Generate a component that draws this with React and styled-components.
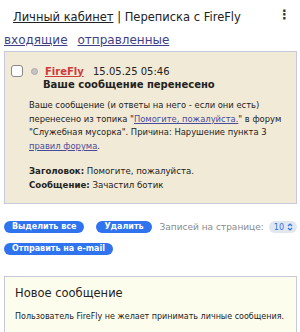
import React from 'react';
import styled, { createGlobalStyle } from 'styled-components';

const Global = createGlobalStyle`
  html, body {
    margin: 0;
    padding: 0;
    background: #fff;
  }
  body {
    font-family: "DejaVu Sans", Verdana, sans-serif;
    color: #222;
  }
`;

const Page = styled.div`
  width: 300px;
  height: 332px;
  overflow: hidden;
  padding: 0 3px 0 4px;
  box-sizing: border-box;
`;

const Header = styled.div`
  display: flex;
  justify-content: space-between;
  align-items: flex-start;
  padding: 10px 6px 0 9px;
  height: 30px;
  box-sizing: border-box;
`;

const Crumbs = styled.div`
  font-size: 11.5px;
  line-height: 14px;
  color: #222;
`;

const CrumbLink = styled.a`
  color: #222;
  text-decoration: underline;
`;

const Kebab = styled.span`
  font-size: 13px;
  line-height: 10px;
  font-weight: bold;
  color: #333;
`;

const Tabs = styled.div`
  display: flex;
  gap: 10px;
  font-size: 12px;
  line-height: 16px;
  height: 21px;
  padding-top: 2px;
  box-sizing: border-box;
`;

const Tab = styled.a`
  color: #3f3f86;
  text-decoration: underline;
`;

const MessageBox = styled.div`
  background: #f1ead6;
  border: 1px solid #c8c8dc;
  height: 153px;
  box-sizing: border-box;
  padding: 13px 8px 0 6px;
`;

const MsgHead = styled.div`
  display: flex;
  align-items: center;
  height: 12px;
`;

const Check = styled.span`
  width: 10px;
  height: 10px;
  border: 1px solid #888;
  border-radius: 3px;
  background: #fff;
  margin-right: 8px;
`;

const Dot = styled.span`
  width: 5px;
  height: 5px;
  border-radius: 50%;
  background: #c4c4c4;
  border: 0.5px solid #aaa;
  margin-right: 7px;
`;

const Author = styled.a`
  color: #d03a3a;
  font-weight: bold;
  font-size: 10px;
  text-decoration: underline;
  width: 48px;
`;

const Date = styled.span`
  font-size: 10px;
  color: #222;
`;

const MsgTitle = styled.div`
  font-weight: bold;
  font-size: 10px;
  line-height: 13px;
  margin: 1px 0 0 32px;
`;

const MsgBody = styled.div`
  font-size: 8.4px;
  line-height: 13.5px;
  padding: 8px 0 0 18px;
`;

const InnerLink = styled.a`
  color: #4a4a9a;
  text-decoration: underline;
`;

const Meta = styled.div`
  margin-top: 12px;
  font-size: 8.6px;
`;

const Actions = styled.div`
  display: flex;
  align-items: center;
  height: 12px;
  margin-top: 17px;
`;

const Button = styled.button`
  background: #2f73ee;
  color: #fff;
  border: none;
  border-radius: 7px;
  font-family: "DejaVu Sans", Verdana, sans-serif;
  font-weight: bold;
  font-size: 8px;
  height: 12px;
  line-height: 12px;
  padding: 0 8px;
  margin-right: ${p => p.gap || 0}px;
`;

const PerPage = styled.div`
  margin-left: auto;
  display: flex;
  align-items: center;
  gap: 5px;
  font-size: 9px;
  color: #8a8a8a;
`;

const SelectPill = styled.span`
  display: flex;
  align-items: center;
  gap: 3px;
  background: #e1e7ef;
  color: #2f73ee;
  border-radius: 6px;
  height: 12px;
  padding: 0 4px 0 5px;
  font-size: 8px;
`;

const SecondRow = styled.div`
  margin-top: 10px;
  height: 12px;
  display: flex;
`;

const NewBox = styled.div`
  margin-top: 21px;
  background: #fdfdee;
  border: 1px solid #c8c8dc;
  height: 58px;
  box-sizing: border-box;
  padding: 9px 6px 0 10px;
`;

const NewTitle = styled.div`
  font-size: 11.5px;
  line-height: 14px;
  color: #222;
`;

const NewNote = styled.div`
  font-size: 8px;
  line-height: 12px;
  margin-top: 11px;
  color: #222;
  white-space: nowrap;
`;

export default function App() {
  return (
    <Page>
      <Global />
      <Header>
        <Crumbs>
          <CrumbLink>Личный кабинет</CrumbLink> | Переписка с FireFly
        </Crumbs>
        <Kebab>⋮</Kebab>
      </Header>
      <Tabs>
        <Tab>входящие</Tab>
        <Tab>отправленные</Tab>
      </Tabs>
      <MessageBox>
        <MsgHead>
          <Check />
          <Dot />
          <Author>FireFly</Author>
          <Date>15.05.25 05:46</Date>
        </MsgHead>
        <MsgTitle>Ваше сообщение перенесено</MsgTitle>
        <MsgBody>
          Ваше сообщение (и ответы на него - если они есть) перенесено из топика "
          <InnerLink>Помогите, пожалуйста.</InnerLink>" в форум "Служебная мусорка". Причина:
          Нарушение пункта 3 <InnerLink>правил форума</InnerLink>.
          <Meta>
            <b>Заголовок:</b> Помогите, пожалуйста.
            <br />
            <b>Сообщение:</b> Зачастил ботик
          </Meta>
        </MsgBody>
      </MessageBox>
      <Actions>
        <Button gap={12}>Выделить все</Button>
        <Button>Удалить</Button>
        <PerPage>
          Записей на странице:
          <SelectPill>
            10
            <svg width="6" height="8" viewBox="0 0 6 8">
              <path d="M1 3 L3 1 L5 3 M1 5 L3 7 L5 5" stroke="#2f73ee" strokeWidth="1.2" fill="none" />
            </svg>
          </SelectPill>
        </PerPage>
      </Actions>
      <SecondRow>
        <Button>Отправить на e-mail</Button>
      </SecondRow>
      <NewBox>
        <NewTitle>Новое сообщение</NewTitle>
        <NewNote>Пользователь FireFly не желает принимать личные сообщения.</NewNote>
      </NewBox>
    </Page>
  );
}
